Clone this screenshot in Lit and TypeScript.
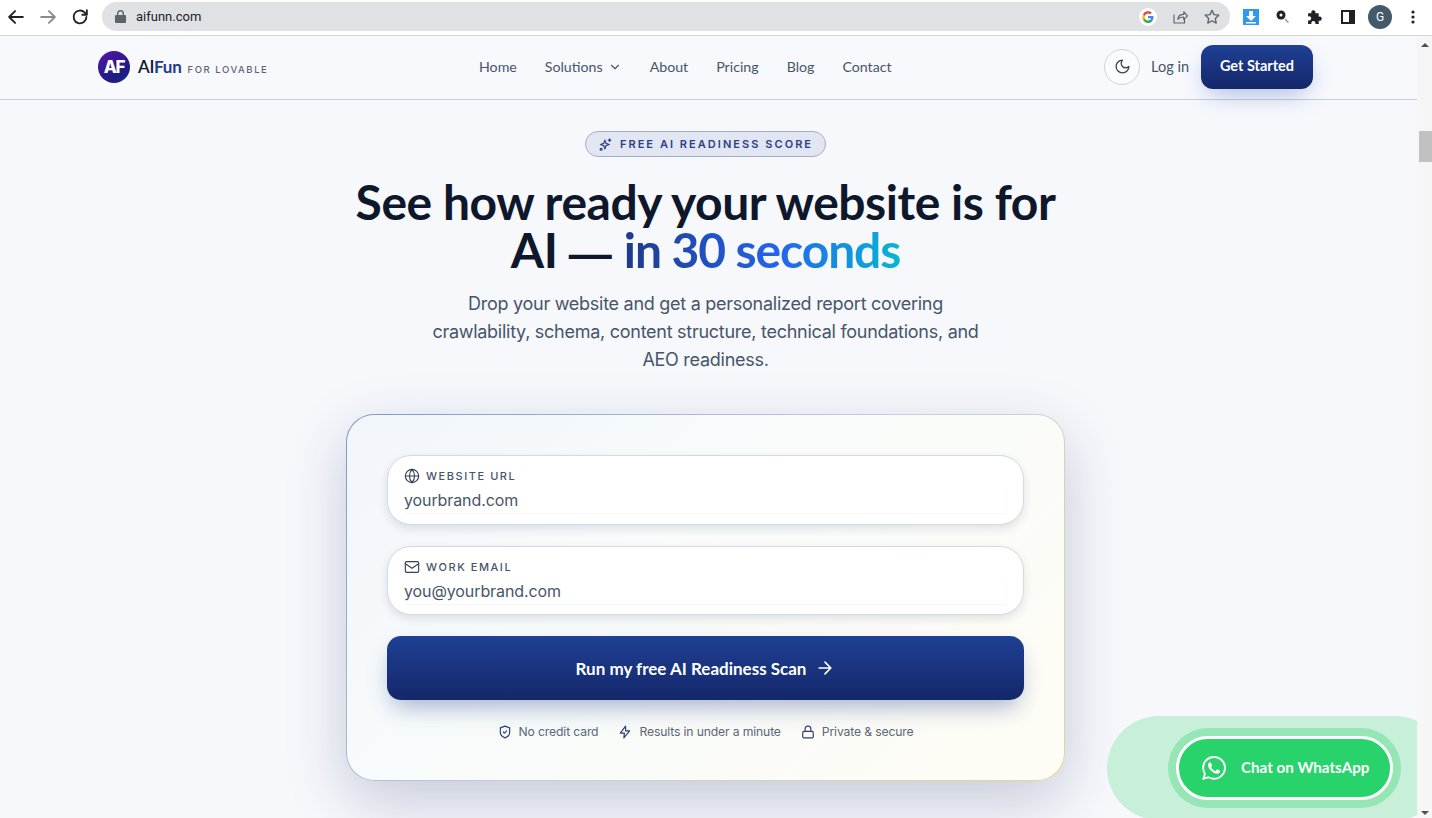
import { LitElement, html, css, svg } from "lit";
import { customElement } from "lit/decorators.js";

const I = (w: number, body: unknown, sw = 2, vb = 24) => html`<svg width=${w} height=${w} viewBox="0 0 ${vb} ${vb}" fill="none" stroke="currentColor" stroke-width=${sw} stroke-linecap="round" stroke-linejoin="round">${body}</svg>`;

@customElement("app-root")
export class AppRoot extends LitElement {
  static styles = css`
    :host { display: block; width: 1432px; height: 818px; overflow: hidden; background: #f6f8fc; font-family: "Inter", sans-serif; color: #0f172a; }
    * { box-sizing: border-box; }
    .chrome { height: 36px; background: #fff; border-bottom: 1px solid #d4d5d8; display: flex; align-items: center; padding: 0 0 2px 5px; }
    .cbtn { width: 22px; height: 22px; display: flex; align-items: center; justify-content: center; color: #202124; }
    .nav-btns { display: flex; gap: 10px; align-items: center; }
    .fwd { color: #8a8b8d; }
    .url { margin-left: 11px; width: 1128px; height: 29px; border-radius: 15px; background: #dfe1e5; display: flex; align-items: center; padding: 0 9px 0 13px; font: 400 13px/1 "Roboto", sans-serif; color: #202124; }
    .url .lock { color: #5f6368; margin-right: 10px; display: flex; }
    .url .sp { flex: 1; }
    .url .ic { display: flex; color: #5f6368; margin-left: 14px; }
    .ext { display: flex; align-items: center; flex: 1; padding-left: 13px; }
    .ext > * { flex: none; display: flex; }
    .avatar { width: 24px; height: 24px; border-radius: 50%; background: #44596a; color: #fff; font: 400 12px/24px "Roboto", sans-serif; justify-content: center; }
    .body { display: flex; height: 782px; }
    .page { width: 1417px; position: relative; overflow: hidden; }
    .bar { width: 15px; background: #f6f6f6; position: relative; display: flex; flex-direction: column; align-items: center; }
    .bar .up { width: 0; height: 0; border: 4px solid transparent; border-top: 0; border-bottom: 4px solid #505050; margin-top: 7px; }
    .bar .thumb { width: 13px; height: 31px; background: #c1c1c1; margin-top: 84px; margin-left: 2px; }
    .bar .down { width: 0; height: 0; border: 4px solid transparent; border-bottom: 0; border-top: 4px solid #505050; position: absolute; bottom: 3px; }
    header { height: 64px; border-bottom: 1px solid #c9cdd6; display: flex; align-items: center; padding: 0 104px 2px 98px; background: #f7f9fd; }
    .logo { display: flex; align-items: center; width: 278px; }
    .mark { width: 32px; height: 32px; border-radius: 50%; background: linear-gradient(150deg, #5a13a8 0%, #1c1c84 70%, #1b2a80 100%); color: #fff; font: 800 17px/32px "Inter", sans-serif; letter-spacing: -1.3px; text-align: center; }
    .bn { font: 600 17px/1 "Lato", sans-serif; margin-left: 8px; color: #0f172a; letter-spacing: -.25px; }
    .bn b { font-weight: 700; color: #1e3a8a; }
    .tag { font: 500 9.5px/1 "Inter", sans-serif; letter-spacing: 1.55px; color: #5b6675; margin-left: 6px; margin-top: 7px; }
    .links { display: flex; align-items: center; gap: 28px; font: 400 14.2px/1 "Lato", sans-serif; color: #475569; margin-left: 103px; margin-top: 2px; }
    .links span { display: flex; align-items: center; gap: 5px; }
    .right { margin-left: auto; display: flex; align-items: center; }
    .moon { width: 36px; height: 36px; border-radius: 50%; border: 1px solid #cfd3da; display: flex; align-items: center; justify-content: center; color: #334155; background: #fbfcfe; }
    .login { font: 400 14.5px/1 "Lato", sans-serif; color: #475569; margin: 2px 12px 0 11px; }
    .gs { width: 112px; height: 44px; border-radius: 12px; background: linear-gradient(180deg, #1f4094, #14276a); color: #fff; font: 700 14.5px/42px "Lato", sans-serif; text-align: center; box-shadow: 0 10px 24px -6px rgba(30,64,175,.35); }
    main { width: 1411px; display: flex; flex-direction: column; align-items: center; padding-top: 31px; }
    .pill { height: 26px; width: 241px; border-radius: 13px; border: 1px solid #a6aec9; background: #e1e6f2; display: flex; align-items: center; justify-content: center; gap: 7px; font: 600 11px/1 "Inter", sans-serif; letter-spacing: 2.05px; color: #2c4087; }
    h1 { margin: 21px 0 0; font: 700 48px/48px "Lato", sans-serif; letter-spacing: -.45px; text-align: center; color: #0f172a; width: 760px; }
    h1 .dash { font: 700 43px/1 "Liberation Sans", sans-serif; letter-spacing: 0; }
    h1 em { font-style: normal; letter-spacing: -1.1px; margin-left: 1px; background: linear-gradient(90deg, #1e3a8a 0%, #2563eb 55%, #06b6d4 100%); -webkit-background-clip: text; background-clip: text; color: transparent; }
    .sub { margin: 15px 0 0; width: 600px; text-align: center; font: 400 18px/28px "Inter", sans-serif; letter-spacing: -.27px; color: #475569; }
    .card { margin-top: 40px; width: 719px; height: 367px; border-radius: 28px; border: 1px solid transparent; padding: 40px; background: linear-gradient(135deg, #f2f5fb 0%, #f7fbfb 35%, #fbfcf8 70%, #fffdf4 100%) padding-box, linear-gradient(135deg, #7f95c8 0%, #c3d0dc 50%, #e6d594 100%) border-box; box-shadow: 0 20px 60px 0 rgba(30,41,90,.22); }
    .field { height: 69.5px; border-radius: 24px; background: #fff; border: 1px solid #d5d9e0; padding: 12px 16px 0; box-shadow: 0 4px 10px rgba(30,41,90,.12); margin-bottom: 21px; }
    .lab { display: flex; align-items: center; gap: 6px; font: 500 11px/16px "Inter", sans-serif; letter-spacing: 1.55px; color: #475569; }
    .lab svg { color: #334155; }
    .val { margin-top: 4px; height: 26px; border-bottom: 1px solid #f6f7f8; border-right: 1px solid #f9fafa; font: 400 16px/24px "Inter", sans-serif; letter-spacing: -.1px; color: #475569; }
    .run { height: 64px; border-radius: 14px; background: linear-gradient(180deg, #1f4094, #14276a); color: #fff; display: flex; align-items: center; justify-content: center; gap: 9px; font: 700 17px/1 "Lato", sans-serif; box-shadow: 0 12px 24px -6px rgba(30,58,138,.4); }
    .trust { display: flex; justify-content: center; gap: 20px; margin-top: 24px; font: 400 12.2px/16px "Inter", sans-serif; letter-spacing: -.15px; color: #5b6678; }
    .trust span { display: flex; align-items: center; gap: 7px; }
    .trust svg { color: #2c3f70; }
    .wa-glow { position: absolute; left: 1107px; top: 680px; width: 340px; height: 104px; border-radius: 52px; background: #c8efd9; }
    .wa-ring { position: absolute; left: 1168px; top: 692px; width: 233px; height: 80px; border-radius: 40px; background: #96e5b4; }
    .wa { position: absolute; left: 1176px; top: 700px; width: 217px; height: 64px; border-radius: 32px; background: #27d36a; border: 3px solid #fff; display: flex; align-items: center; padding-left: 23px; gap: 15px; color: #fff; font: 700 15.2px/1 "Lato", sans-serif; }
  `;
  render() {
    return html`
      <div class="chrome">
        <div class="nav-btns">
          <div class="cbtn">${I(22, svg`<path d="M19.500 12H4.500M11 5.500 4.500 12l6.500 6.500"/>`, 2)}</div>
          <div class="cbtn fwd">${I(22, svg`<path d="M4.500 12h15M13 5.500l6.500 6.500-6.500 6.500"/>`, 2)}</div>
          <div class="cbtn">${I(22, svg`<path d="M19 12a7 7 0 1 1-2-5L19.500 9.500M19.500 4.500v5h-5"/>`, 2)}</div>
        </div>
        <div class="url">
          <span class="lock"><svg width="11" height="13" viewBox="0 0 11 13"><path fill="currentColor" d="M2 5V3.600a3.500 3.500 0 0 1 7 0V5h1a1 1 0 0 1 1 1v6a1 1 0 0 1-1 1H1a1 1 0 0 1-1-1V6a1 1 0 0 1 1-1zm1.400 0h4.200V3.600a2.100 2.100 0 0 0-4.200 0z"/></svg></span>
          aifunn.com
          <span class="sp"></span>
          <span class="ic"><svg width="18" height="18" viewBox="0 0 18 18"><circle cx="9" cy="9" r="9" fill="#fff"/><path d="M14.500 9.200c0-.4 0-.8-.1-1.100H9v2.100h3.100a2.700 2.700 0 0 1-1.200 1.800v1.400h1.900c1.100-1 1.700-2.500 1.700-4.200z" fill="#4285f4"/><path d="M9 15c1.600 0 2.900-.5 3.800-1.500l-1.900-1.400c-.5.300-1.100.5-1.900.5-1.500 0-2.700-1-3.100-2.300H3.900v1.500A5.900 5.900 0 0 0 9 15z" fill="#34a853"/><path d="M5.900 10.800a3.500 3.500 0 0 1 0-2.300V7H3.900a6 6 0 0 0 0 5.300z" fill="#fbbc05"/><path d="M9 5.400c.9 0 1.600.3 2.200.9l1.700-1.700A5.800 5.800 0 0 0 3.900 6.300l2 1.500C6.300 6.400 7.500 5.400 9 5.400z" fill="#ea4335"/></svg></span>
          <span class="ic">${I(18, svg`<path d="M4 9v11h14v-5M9 15c.5-4 3.500-6.500 8-6.500V5l5 5.500L17 15.500V12c-3.500 0-6 1-8 3z"/>`, 1.5)}</span>
          <span class="ic">${I(18, svg`<path d="m12 3 2.700 5.800 6.300.8-4.600 4.300 1.200 6.300L12 17l-5.600 3.200 1.200-6.300L3 9.600l6.300-.8z"/>`, 1.8)}</span>
        </div>
        <div class="ext">
          <span><svg width="16" height="16" viewBox="0 0 16 16"><rect width="16" height="16" fill="#2d9af0"/><path d="M6 2h4v5h3l-5 5-5-5h3zM3 13h10v1.500H3z" fill="#fff"/></svg></span>
          <span style="margin-left:16px"><svg width="16" height="16" viewBox="0 0 16 16"><circle cx="6" cy="6" r="4.500" fill="#222"/><circle cx="6" cy="6" r="1.500" fill="#fff"/><path d="m10 10 3.500 3.500" stroke="#999" stroke-width="1.500"/></svg></span>
          <span style="margin-left:16px"><svg width="17" height="17" viewBox="0 0 16 16"><path fill="#202124" d="M1 5h3.200a2 2 0 1 1 3.600 0H11v3.200a2 2 0 1 1 0 3.600V15H7.800a2 2 0 1 0-3.600 0H1v-3.500a2 2 0 1 0 0-3.500z"/></svg></span>
          <span style="margin-left:17px"><svg width="14" height="14" viewBox="0 0 14 14"><path fill="#202124" d="M0 0h14v14H0zm2 2v10h6V2z"/></svg></span>
          <span class="avatar" style="margin-left:13px">G</span>
          <span style="margin-left:19px"><svg width="4" height="14" viewBox="0 0 4 14"><g fill="#202124"><circle cx="2" cy="2" r="1.600"/><circle cx="2" cy="7" r="1.600"/><circle cx="2" cy="12" r="1.600"/></g></svg></span>
        </div>
      </div>
      <div class="body">
        <div class="page">
          <header>
            <div class="logo">
              <div class="mark">AF</div>
              <span class="bn">AI<b>Fun</b></span>
              <span class="tag">FOR LOVABLE</span>
            </div>
            <nav class="links">
              <span>Home</span>
              <span>Solutions ${I(14, svg`<path d="m6 9 6 6 6-6"/>`, 2)}</span>
              <span>About</span><span>Pricing</span><span>Blog</span><span>Contact</span>
            </nav>
            <div class="right">
              <div class="moon">${I(17, svg`<path d="M12 3a6 6 0 0 0 9 9 9 9 0 1 1-9-9z"/>`, 1.8)}</div>
              <span class="login">Log in</span>
              <div class="gs">Get Started</div>
            </div>
          </header>
          <main>
            <div class="pill">${I(15, svg`<path d="M11 5l1.800 5.200L18 12l-5.200 1.800L11 19l-1.800-5.200L4 12l5.200-1.800zM18.500 3v4M16.500 5h4"/><circle cx="5" cy="19.500" r="1.500"/>`, 2)}FREE AI READINESS SCORE</div>
            <h1>See how ready your website is for<br>AI <span class="dash">—</span> <em>in 30 seconds</em></h1>
            <p class="sub">Drop your website and get a personalized report covering<br>crawlability, schema, content structure, technical foundations, and<br>AEO readiness.</p>
            <div class="card">
              <div class="field">
                <div class="lab">${I(16, svg`<circle cx="12" cy="12" r="10"/><path d="M2 12h20M12 2a15 15 0 0 1 0 20 15 15 0 0 1 0-20z"/>`, 1.7)}WEBSITE URL</div>
                <div class="val">yourbrand.com</div>
              </div>
              <div class="field">
                <div class="lab">${I(16, svg`<rect x="2" y="4" width="20" height="16" rx="2"/><path d="m22 7-10 7L2 7"/>`, 1.7)}WORK EMAIL</div>
                <div class="val">you@yourbrand.com</div>
              </div>
              <div class="run">Run my free AI Readiness Scan ${I(20, svg`<path d="M5 12h14M12 5l7 7-7 7"/>`, 2)}</div>
              <div class="trust">
                <span>${I(14, svg`<path d="M20 13c0 5-3.500 7.500-8 9-4.500-1.500-8-4-8-9V5l8-3 8 3z"/><path d="m9 12 2 2 4-4"/>`, 2)}No credit card</span>
                <span>${I(14, svg`<path d="M13 2 4 14h7l-1 8 10-12h-7z"/>`, 2)}Results in under a minute</span>
                <span>${I(14, svg`<rect x="3" y="11" width="18" height="11" rx="2"/><path d="M7 11V7a5 5 0 0 1 10 0v4"/>`, 2)}Private &amp; secure</span>
              </div>
            </div>
          </main>
          <div class="wa-glow"></div>
          <div class="wa-ring"></div>
          <div class="wa">
            <svg width="24" height="24" viewBox="0 0 24 24" fill="#fff"><path d="M17.500 14.400c-.3-.1-1.800-.9-2-1-.3-.1-.5-.1-.7.2-.2.300-.8 1-.9 1.200-.2.200-.3.200-.6.100-.3-.2-1.300-.5-2.400-1.500-.9-.8-1.500-1.800-1.700-2.100-.2-.3 0-.5.1-.6l.4-.5c.2-.2.200-.3.300-.5.100-.2 0-.4 0-.5-.1-.2-.7-1.700-.9-2.300-.2-.6-.5-.5-.7-.5h-.6c-.2 0-.5.100-.8.400-.3.300-1 1-1 2.500s1.100 2.900 1.200 3.100c.2.200 2.100 3.200 5 4.500.7.300 1.300.5 1.700.6.700.2 1.400.2 1.900.1.600-.1 1.800-.7 2-1.400.2-.7.200-1.300.2-1.400-.1-.1-.3-.2-.6-.300zM12 21.800a9.900 9.900 0 0 1-5-1.400l-.4-.2-3.700 1 1-3.600-.2-.4A9.900 9.900 0 1 1 12 21.800zM20.500 3.500A11.800 11.800 0 0 0 1.900 17.800L.2 24l6.300-1.700A11.900 11.900 0 0 0 24 12a11.800 11.800 0 0 0-3.500-8.500z"/></svg>
            Chat on WhatsApp
          </div>
        </div>
        <div class="bar"><div class="up"></div><div class="thumb"></div><div class="down"></div></div>
      </div>
    `;
  }
}
